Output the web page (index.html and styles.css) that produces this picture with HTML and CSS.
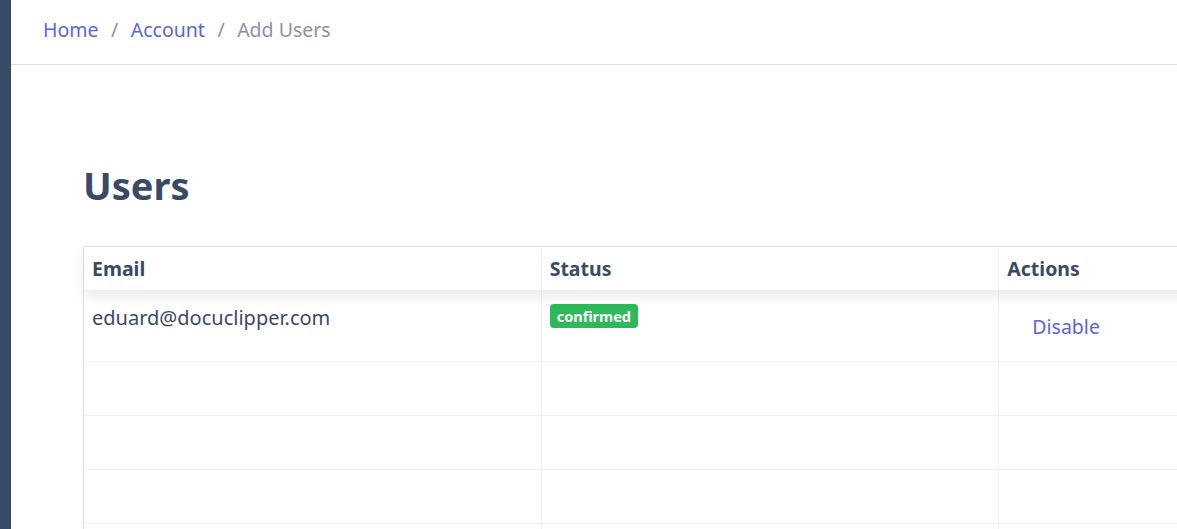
FILE: index.html
```html
<!DOCTYPE html>
<html>
<head>
<meta charset="utf-8">
<link rel="stylesheet" href="styles.css">
</head>
<body>
<div class="layout">
  <aside class="sidebar"></aside>
  <main class="main">
    <header class="topbar">
      <nav class="crumbs">
        <a class="crumb-link" href="#">Home</a>
        <span class="sep">/</span>
        <a class="crumb-link" href="#">Account</a>
        <span class="sep">/</span>
        <span class="crumb-current">Add Users</span>
      </nav>
    </header>
    <section class="content">
      <h1 class="title">Users</h1>
      <div class="table-wrap">
        <table class="users">
          <thead>
            <tr><th>Email</th><th>Status</th><th>Actions</th></tr>
          </thead>
          <tbody>
            <tr class="row-first">
              <td class="email">eduard@docuclipper.com</td>
              <td><span class="badge">confirmed</span></td>
              <td><a class="action" href="#">Disable</a></td>
            </tr>
            <tr class="row-empty"><td></td><td></td><td></td></tr>
            <tr class="row-empty"><td></td><td></td><td></td></tr>
            <tr class="row-empty"><td></td><td></td><td></td></tr>
            <tr class="row-empty"><td></td><td></td><td></td></tr>
          </tbody>
        </table>
      </div>
    </section>
  </main>
</div>
</body>
</html>
```

FILE: styles.css
```css
html, body {
  margin: 0;
  padding: 0;
  background: #ffffff;
  font-family: "Noto Sans", "Open Sans", sans-serif;
  color: #3b4a63;
  overflow: hidden;
}
.layout {
  display: flex;
  height: 529px;
  overflow: hidden;
}
.sidebar {
  width: 11px;
  flex: 0 0 11px;
  background: #394a65;
}
.main {
  flex: 1;
  min-width: 0;
  overflow: hidden;
}
.topbar {
  height: 65px;
  border-bottom: 1px solid #dedede;
  box-sizing: border-box;
  display: flex;
  align-items: center;
  padding: 0 0 6px 32px;
}
.crumbs {
  font-size: 19.5px;
  display: flex;
  align-items: center;
}
.crumb-link {
  color: #5a67d8;
  text-decoration: none;
}
.sep {
  color: #8a93a3;
  margin: 0 12.5px;
}
.crumb-current {
  color: #8a93a3;
}
.content {
  padding: 90px 0 0 72px;
}
.title {
  margin: 0 0 31px 0;
  font-size: 38px;
  font-weight: 700;
  line-height: 60px;
  color: #394a65;
}
.table-wrap {
  width: 1400px;
}
.users {
  border-collapse: collapse;
  table-layout: fixed;
  width: 1374px;
  border: 1px solid #e3e3e3;
}
.users th, .users td {
  border: 1px solid #efefef;
  text-align: left;
  vertical-align: top;
  padding: 0 8px;
}
.users thead tr {
  box-shadow: 0 6px 12px rgba(0,0,0,0.08);
  position: relative;
}
.users th {
  height: 43px;
  font-size: 19.5px;
  font-weight: 700;
  color: #394a65;
  vertical-align: middle;
  border-top: 1px solid #e3e3e3;
}
.users th:first-child, .users td:first-child {
  border-left: 1px solid #e0e0e0;
}
.row-first td {
  height: 71px;
  padding-top: 13px;
  box-sizing: border-box;
  font-size: 20px;
  color: #3b4a63;
}
.row-empty td {
  height: 53px;
}
.badge {
  display: inline-block;
  vertical-align: top;
  background: #2db85a;
  color: #ffffff;
  font-size: 14.5px;
  font-weight: 700;
  line-height: 24px;
  padding: 0 7px;
  border-radius: 4px;
  margin-top: 0;
}
.action {
  display: inline-block;
  color: #5a67d8;
  text-decoration: none;
  font-size: 19.5px;
  padding: 9px 25px 0;
}
```
